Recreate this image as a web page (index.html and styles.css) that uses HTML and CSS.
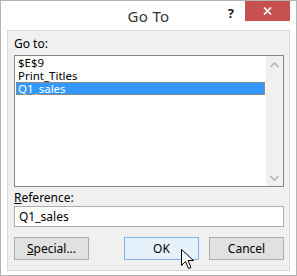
FILE: index.html
```html
<!DOCTYPE html>
<html lang="en">
<head>
    <meta charset="UTF-8">
    <title>Go To</title>
    <link rel="stylesheet" href="styles.css">
</head>
<body>
    <div class="window">
        <!-- Barra de titulo -->
        <div class="titlebar">
            <div></div>
            <div class="title">Go To</div>
            <div class="controls">
                <span class="help">?</span>
                <span class="close">
                    <svg width="9" height="8" viewBox="0 0 9 8"><path d="M1 0.5 L8 7.5 M8 0.5 L1 7.5" stroke="#fff" stroke-width="1.7"/></svg>
                </span>
            </div>
        </div>

        <div class="panel">
            <div class="label">Go to:</div>
            <div class="listbox">
                <div class="items">
                    <div class="item">$E$9</div>
                    <div class="item">Print_Titles</div>
                    <div class="item selected">Q1_sales</div>
                </div>
                <div class="scrollbar">
                    <svg width="9" height="6" viewBox="0 0 9 6"><path d="M0.5 5 L4.5 1 L8.5 5" stroke="#b0b0b0" stroke-width="1.5" fill="none"/></svg>
                    <svg width="9" height="6" viewBox="0 0 9 6"><path d="M0.5 1 L4.5 5 L8.5 1" stroke="#b0b0b0" stroke-width="1.5" fill="none"/></svg>
                </div>
            </div>

            <div class="label ref-label"><u>R</u>eference:</div>
            <div class="textbox">Q1_sales</div>

            <div class="buttons">
                <button><u>S</u>pecial...</button>
                <div class="right-buttons">
                    <button class="hover">OK</button>
                    <button>Cancel</button>
                </div>
            </div>
        </div>

        <!-- ponteiro do mouse -->
        <svg class="cursor" width="13" height="21" viewBox="0 0 13 21">
            <path d="M0.5 0.5 L0.5 16.5 L4.5 12.5 L7.5 19.5 L10 18.5 L7 11.5 L12.5 11.5 Z" fill="#fff" stroke="#000" stroke-width="1"/>
        </svg>
    </div>
</body>
</html>
```

FILE: styles.css
```css
body {
    margin: 0;
    font-family: "Noto Sans", sans-serif;
    font-size: 12px;
    color: #000;
    background: #fff;
}
.window {
    position: relative;
    width: 295px;
    height: 274px;
    border: 1px solid #b4b4b4;
    background: #fff;
    display: flex;
    flex-direction: column;
}
.titlebar {
    height: 29px;
    display: grid;
    grid-template-columns: 1fr auto 1fr;
}
.title {
    font-size: 15px;
    color: #333;
    padding-top: 5px;
    letter-spacing: 0.3px;
}
.controls {
    display: flex;
    justify-content: flex-end;
    align-items: flex-start;
    padding-right: 6px;
}
.help {
    font-weight: bold;
    font-size: 13px;
    color: #222;
    margin-right: 11px;
    margin-top: 3px;
}
.close {
    width: 45px;
    height: 20px;
    background: #c75050;
    display: flex;
    align-items: center;
    justify-content: center;
}
.panel {
    flex: 1;
    margin: 0 6px 4px 6px;
    border: 1px solid #dadada;
    background: #f0f0f0;
    padding: 5px 5px 0 6px;
}
.label {
    line-height: 16px;
    margin-bottom: 3px;
}
.listbox {
    height: 130px;
    border: 1px solid #828790;
    background: #fff;
    display: flex;
}
.items {
    flex: 1;
    padding: 0 1px;
}
.item {
    height: 13px;
    line-height: 13px;
    font-size: 11.5px;
    padding-left: 2px;
}
.item.selected {
    background: #3399ff;
    color: #fff;
    outline: 1px dotted #e07b1f;
    outline-offset: -1px;
}
.scrollbar {
    width: 17px;
    background: #f0f0f0;
    display: flex;
    flex-direction: column;
    justify-content: space-between;
    align-items: center;
    padding: 6px 0 5px 0;
}
.ref-label {
    margin-top: 4px;
    line-height: 14px;
    margin-bottom: 1px;
}
.textbox {
    height: 19px;
    line-height: 19px;
    border: 1px solid #abadb3;
    background: #fff;
    padding-left: 4px;
}
.buttons {
    display: flex;
    justify-content: space-between;
    margin-top: 10px;
}
.right-buttons {
    display: flex;
    gap: 10px;
}
button {
    width: 75px;
    height: 23px;
    font-family: "Noto Sans", sans-serif;
    font-size: 12px;
    color: #000;
    background: #e1e1e1;
    border: 1px solid #adadad;
    padding: 0;
}
button.hover {
    background: #e5f1fb;
    border-color: #7eb4ea;
}
.cursor {
    position: absolute;
    left: 180px;
    top: 248px;
}
```
